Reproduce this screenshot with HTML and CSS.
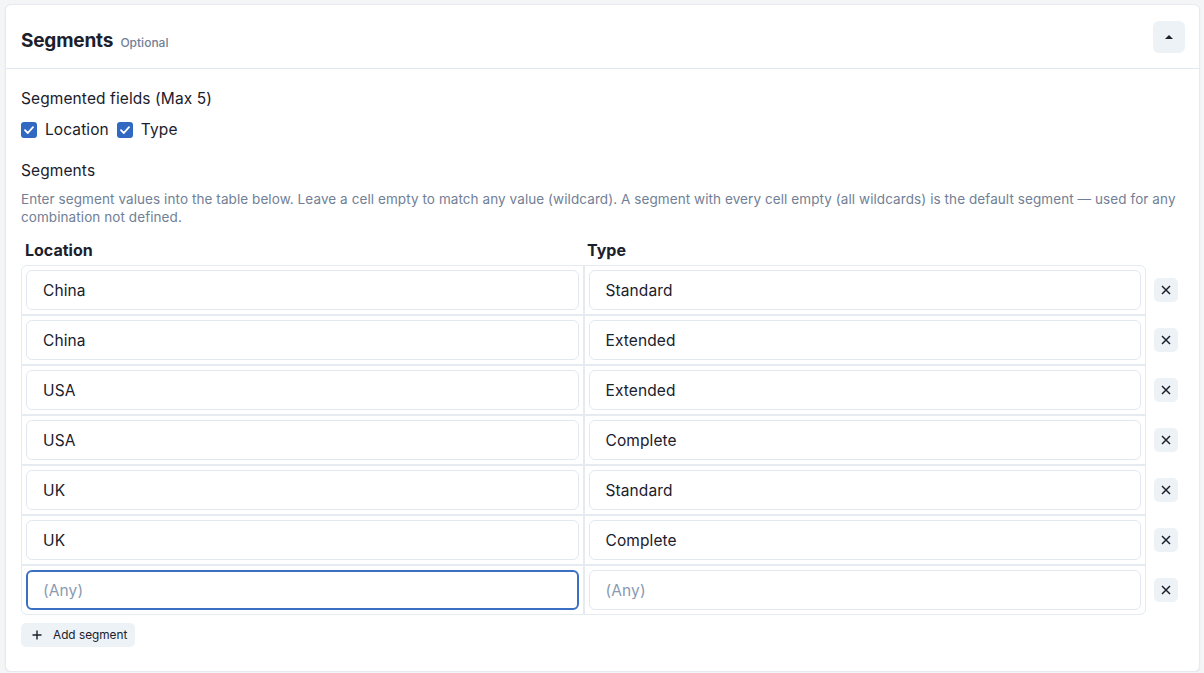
FILE: index.html
```html
<!DOCTYPE html>
<html lang="en">
<head>
    <meta charset="UTF-8">
    <meta name="viewport" content="width=device-width, initial-scale=1.0">
    <title>Segments</title>
    <link rel="stylesheet" href="styles.css">
</head>
<body>

<div class="card">
    <div class="card-header">
        <h2 class="card-title">Segments <span class="optional">Optional</span></h2>
        <button class="collapse-btn" type="button" aria-label="Collapse">
            <svg width="8" height="5" viewBox="0 0 8 5"><path d="M0 5 L4 1 L8 5 Z" fill="#1a202c"/></svg>
        </button>
    </div>

    <div class="card-body">
        <div class="field-label">Segmented fields (Max 5)</div>
        <div class="checks">
            <label class="check"><span class="box"><svg width="10" height="8" viewBox="0 0 10 8"><path d="M1 4.2 L3.8 7 L9 1.2" fill="none" stroke="#fff" stroke-width="1.8" stroke-linecap="round" stroke-linejoin="round"/></svg></span>Location</label>
            <label class="check"><span class="box"><svg width="10" height="8" viewBox="0 0 10 8"><path d="M1 4.2 L3.8 7 L9 1.2" fill="none" stroke="#fff" stroke-width="1.8" stroke-linecap="round" stroke-linejoin="round"/></svg></span>Type</label>
        </div>

        <div class="field-label segments-label">Segments</div>
        <p class="help">Enter segment values into the table below. Leave a cell empty to match any value (wildcard). A segment with every cell empty (all wildcards) is the default segment — used for any combination not defined.</p>

        <div class="seg-head">
            <div>Location</div>
            <div>Type</div>
        </div>

        <div class="seg-wrap">
            <div class="seg-table" id="segTable"></div>
            <div class="seg-remove" id="segRemove"></div>
        </div>

        <button class="add-btn" type="button">
            <svg width="10" height="10" viewBox="0 0 10 10"><path d="M5 0.5 V9.5 M0.5 5 H9.5" stroke="#1a202c" stroke-width="1.4"/></svg>
            Add segment
        </button>
    </div>
</div>

<script>
    const rows = [
        ['China', 'Standard'],
        ['China', 'Extended'],
        ['USA', 'Extended'],
        ['USA', 'Complete'],
        ['UK', 'Standard'],
        ['UK', 'Complete'],
        ['', '']
    ];

    const table = document.getElementById('segTable');
    const remove = document.getElementById('segRemove');

    rows.forEach(function (row, i) {
        row.forEach(function (val, j) {
            const cell = document.createElement('div');
            cell.className = 'seg-cell';
            const input = document.createElement('input');
            input.type = 'text';
            input.className = 'seg-input';
            input.placeholder = '(Any)';
            input.value = val;
            if (i === rows.length - 1 && j === 0) input.classList.add('focused');
            cell.appendChild(input);
            table.appendChild(cell);
        });

        const slot = document.createElement('div');
        slot.className = 'remove-slot';
        slot.innerHTML = '<button class="remove-btn" type="button" aria-label="Remove">' +
            '<svg width="10" height="10" viewBox="0 0 10 10"><path d="M1 1 L9 9 M9 1 L1 9" stroke="#1a202c" stroke-width="1.5"/></svg>' +
            '</button>';
        remove.appendChild(slot);
    });
</script>

</body>
</html>
```

FILE: styles.css
```css
body {
    margin: 0;
    padding: 4px 4px 0 5px;
    background-color: #f4f5f7;
    font-family: Inter, "Noto Sans", sans-serif;
    color: #1a202c;
}
.card {
    background-color: #fff;
    border: 1px solid #e6e9ee;
    border-radius: 6px;
    box-shadow: 0 1px 2px rgba(0, 0, 0, 0.05);
    height: 668px;
    box-sizing: border-box;
}
.card-header {
    display: flex;
    align-items: center;
    justify-content: space-between;
    height: 63px;
    padding: 0 14px 0 15px;
    border-bottom: 1px solid #e2e8f0;
}
.card-title {
    margin: 0;
    padding-top: 8px;
    font-size: 19px;
    font-weight: 700;
    letter-spacing: -0.2px;
}
.optional {
    margin-left: 3px;
    font-size: 12px;
    font-weight: 500;
    color: #718096;
    letter-spacing: 0;
}
.collapse-btn {
    width: 32px;
    height: 32px;
    border: none;
    border-radius: 6px;
    background-color: #edf2f7;
    display: flex;
    align-items: center;
    justify-content: center;
    padding: 0;
}
.card-body {
    padding: 21px 21px 0 15px;
}
.field-label {
    font-size: 15.5px;
    line-height: 18px;
    letter-spacing: 0.1px;
}
.checks {
    display: flex;
    gap: 8px;
    margin-top: 12px;
}
.check {
    display: flex;
    align-items: center;
    gap: 8px;
    font-size: 15.5px;
    letter-spacing: 0.1px;
}
.box {
    width: 16px;
    height: 16px;
    border-radius: 3px;
    background-color: #3168c2;
    display: flex;
    align-items: center;
    justify-content: center;
}
.segments-label {
    margin-top: 23px;
}
.help {
    margin: 10px 0 0;
    font-size: 13.5px;
    line-height: 18px;
    letter-spacing: 0.08px;
    color: #718096;
}
.seg-head {
    display: grid;
    grid-template-columns: 562px 1fr;
    margin: 15px 32px 0 0;
    font-size: 16px;
    font-weight: 700;
    line-height: 18px;
}
.seg-head div {
    padding-left: 4px;
}
.seg-wrap {
    display: flex;
    gap: 8px;
    margin-top: 6px;
}
.seg-table {
    flex: 1;
    display: grid;
    grid-template-columns: 1fr 1fr;
    gap: 2px;
    background-color: #e6ebf1;
    border: 1px solid #e6ebf1;
    border-radius: 6px;
    overflow: hidden;
}
.seg-cell {
    background-color: #fff;
    padding: 4px;
}
.seg-input {
    display: block;
    width: 100%;
    height: 40px;
    box-sizing: border-box;
    border: 1px solid #e2e8f0;
    border-radius: 6px;
    padding: 0 16px;
    font-family: inherit;
    font-size: 15.5px;
    letter-spacing: 0.1px;
    color: #1a202c;
    outline: none;
}
.seg-input::placeholder {
    color: #8a9ab2;
}
.seg-input.focused {
    border: 2px solid #3a6fc4;
    padding-left: 15px;
}
.seg-remove {
    display: flex;
    flex-direction: column;
    padding-top: 1px;
    gap: 2px;
}
.remove-slot {
    height: 48px;
    display: flex;
    align-items: center;
}
.remove-btn {
    width: 24px;
    height: 24px;
    border: none;
    border-radius: 5px;
    background-color: #edf2f7;
    display: flex;
    align-items: center;
    justify-content: center;
    padding: 0;
}
.add-btn {
    margin-top: 8px;
    height: 24px;
    padding: 0 8px 0 11px;
    border: none;
    border-radius: 5px;
    background-color: #edf2f7;
    display: flex;
    align-items: center;
    gap: 11px;
    font-family: inherit;
    font-size: 11.8px;
    color: #1a202c;
}
```
